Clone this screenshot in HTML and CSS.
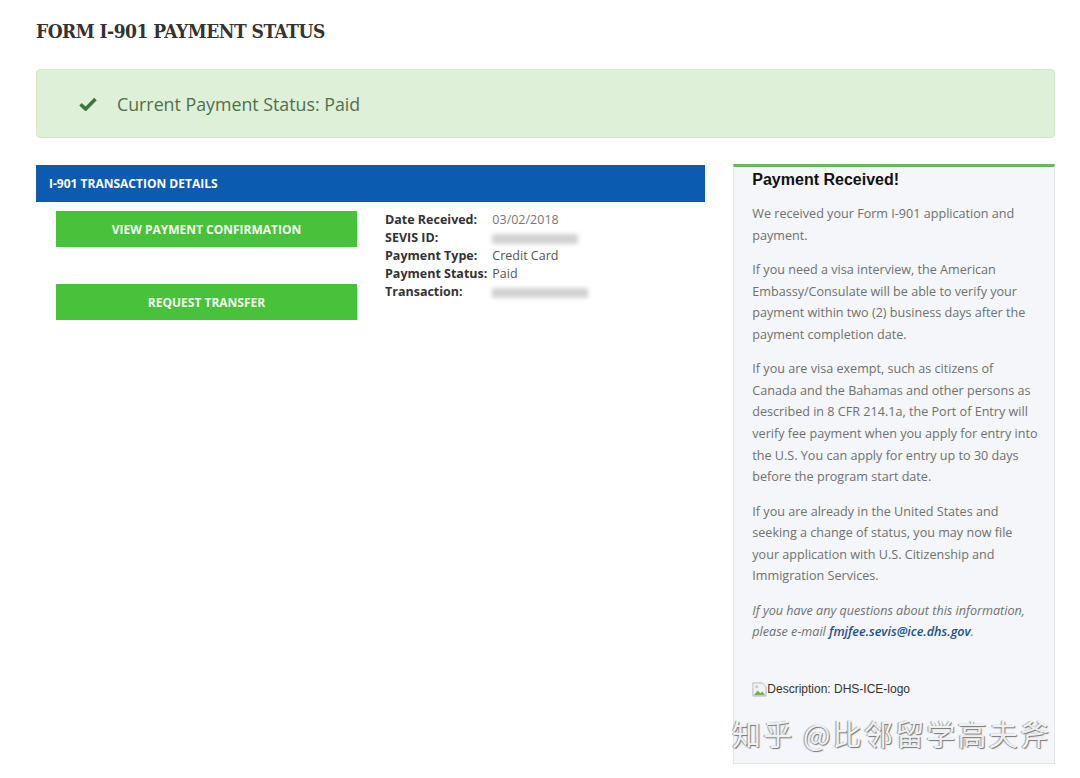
FILE: index.html
```html
<!DOCTYPE html>
<html lang="en">
<head>
    <meta charset="utf-8">
    <title>Form I-901 Payment Status</title>
    <link rel="stylesheet" href="styles.css">
</head>
<body>
    <div class="page">
        <h1 class="page-title">FORM I-901 PAYMENT STATUS</h1>

        <div class="alert-paid">
            <svg class="check" viewBox="0 0 18 14" width="18" height="14">
                <path d="M1.5 7.2 L6.6 12 L16.5 2" fill="none" stroke="#3c763d" stroke-width="3.6" stroke-linejoin="miter"/>
            </svg>
            <span>Current Payment Status: Paid</span>
        </div>

        <div class="content">
            <div class="main-col">
                <div class="section-bar">I-901 TRANSACTION DETAILS</div>
                <div class="details">
                    <div class="actions">
                        <button class="btn-green">VIEW PAYMENT CONFIRMATION</button>
                        <button class="btn-green">REQUEST TRANSFER</button>
                    </div>
                    <table class="info-table">
                        <tr><th>Date Received:</th><td class="light">03/02/2018</td></tr>
                        <tr><th>SEVIS ID:</th><td><span class="blur" style="width:86px"></span></td></tr>
                        <tr><th>Payment Type:</th><td>Credit Card</td></tr>
                        <tr><th>Payment Status:</th><td>Paid</td></tr>
                        <tr><th>Transaction:</th><td><span class="blur" style="width:96px"></span></td></tr>
                    </table>
                </div>
            </div>

            <div class="side-panel">
                <h3>Payment Received!</h3>
                <p>We received your Form I-901 application and payment.</p>
                <p>If you need a visa interview, the American Embassy/Consulate will be able to verify your payment within two (2) business days after the payment completion date.</p>
                <p>If you are visa exempt, such as citizens of Canada and the Bahamas and other persons as described in 8 CFR 214.1a, the Port of Entry will verify fee payment when you apply for entry into the U.S. You can apply for entry up to 30 days before the program start date.</p>
                <p>If you are already in the United States and seeking a change of status, you may now file your application with U.S. Citizenship and Immigration Services.</p>
                <p class="note">If you have any questions about this information, please e-mail <a href="#">fmjfee.sevis@ice.dhs.gov</a>.</p>
                <div class="logo-alt">
                    <svg viewBox="0 0 16 16" width="15" height="15">
                        <path d="M1 1 H11 L15 5 V15 H1 Z" fill="#f2f2f2" stroke="#b5b5b5"/>
                        <path d="M2 14 L6 9 L9 12 L11 10 L14 14 Z" fill="#6fb24f"/>
                        <circle cx="5" cy="5" r="1.6" fill="#c9c9c9"/>
                    </svg>Description: DHS-ICE-logo
                </div>
            </div>
        </div>
    </div>
    <div class="watermark">知乎 @比邻留学高夫斧</div>
</body>
</html>
```

FILE: styles.css
```css
body {
    margin: 0;
    background: #fff;
    font-family: 'Open Sans', 'Liberation Sans', sans-serif;
    color: #333;
}
.page {
    padding: 15px 25px 0 36px;
}
.page-title {
    font-family: 'DejaVu Serif', 'Liberation Serif', serif;
    font-size: 19px;
    font-stretch: condensed;
    font-weight: bold;
    color: #333;
    margin: 0 0 22px 0;
    line-height: 32px;
    letter-spacing: -0.5px;
}
.alert-paid {
    background: #dff0d8;
    border: 1px solid #d6e9c6;
    border-radius: 4px;
    height: 67px;
    display: flex;
    align-items: center;
    padding-left: 42px;
    color: #4f6f4c;
    font-size: 17.8px;
}
.alert-paid .check {
    margin-right: 20px;
}
.content {
    display: flex;
    margin-top: 26px;
    gap: 28px;
}
.main-col {
    width: 670px;
    padding-top: 1px;
}
.section-bar {
    background: #0b5cb0;
    color: #fff;
    font-weight: bold;
    font-size: 12px;
    height: 37px;
    line-height: 37px;
    padding-left: 13px;
}
.details {
    display: flex;
    align-items: flex-start;
    padding: 9px 0 0 20px;
    gap: 28px;
}
.actions {
    display: flex;
    flex-direction: column;
    gap: 37px;
}
.btn-green {
    width: 301px;
    height: 36px;
    background: #47c23a;
    color: #f4fff0;
    border: none;
    font-family: 'Open Sans', sans-serif;
    font-weight: bold;
    font-size: 12px;
    padding: 0;
}
.info-table {
    border-collapse: collapse;
    font-size: 12.5px;
}
.info-table th {
    text-align: left;
    font-weight: bold;
    color: #333;
    padding: 0 5px 0 0;
    height: 18px;
    line-height: 18px;
    white-space: nowrap;
}
.info-table td {
    color: #555;
    padding: 0;
    height: 18px;
    line-height: 18px;
}
.info-table td.light {
    color: #777;
}
.blur {
    display: inline-block;
    height: 10px;
    vertical-align: middle;
    background: #d2d2d2;
    filter: blur(2px);
}
.side-panel {
    width: 288px;
    background: #f4f6f9;
    border: 1px solid #e2e4e6;
    border-top: 3px solid #66b95a;
    padding: 2px 14px 0 18px;
    height: 594px;
}
.side-panel h3 {
    font-family: 'Liberation Sans', Arial, sans-serif;
    font-size: 16px;
    color: #111;
    margin: 0 0 12px 0;
    line-height: 22px;
}
.side-panel p {
    font-size: 12.6px;
    line-height: 21.6px;
    color: #707070;
    margin: 0 0 12.8px 0;
}
.side-panel .note {
    font-style: italic;
}
.side-panel .note a {
    color: #1e4f8c;
    font-weight: 600;
    text-decoration: none;
}
.logo-alt {
    margin-top: 39px;
    font-family: 'Liberation Sans', Arial, sans-serif;
    font-size: 12px;
    color: #333;
    display: flex;
    align-items: center;
}
.watermark {
    position: absolute;
    left: 732px;
    top: 712px;
    font-family: 'Noto Sans CJK SC', sans-serif;
    font-size: 29px;
    color: rgba(255, 255, 255, 0.9);
    text-shadow: 1px 1px 1px #777, -1px 0 1px #999;
    letter-spacing: 2.2px;
}
```
